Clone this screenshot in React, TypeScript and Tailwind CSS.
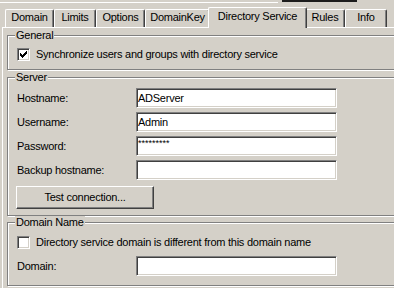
import React from 'react';

const sunken =
  'border border-t-[#808080] border-l-[#808080] border-b-white border-r-white shadow-[inset_1px_1px_0_#404040,inset_-1px_-1px_0_#d4d0c8] bg-white';

const tabs = [
  { label: 'Domain', cls: 'w-[49px] h-[18px] pt-[1px]' },
  { label: 'Limits', cls: 'w-[42px] h-[18px] pt-[1px]' },
  { label: 'Options', cls: 'w-[49px] h-[18px] pt-[1px]' },
  { label: 'DomainKey', cls: 'w-[65px] h-[18px] pt-[1px]' },
  { label: 'Directory Service', cls: 'relative z-10 -mx-[2px] mb-[-1px] w-[99px] h-[21px] pt-[2px]' },
  { label: 'Rules', cls: 'w-[40px] h-[18px] pt-[1px]' },
  { label: 'Info', cls: 'w-[42px] h-[18px] pt-[1px]' },
];

function Check({ checked }: { checked?: boolean }) {
  return (
    <div className={`w-[13px] h-[13px] shrink-0 flex items-center justify-center ${sunken}`}>
      {checked && (
        <svg width="7" height="7" viewBox="0 0 7 7" shapeRendering="crispEdges">
          {[2, 3, 4, 3, 2, 1, 0].map((y, i) => (
            <rect key={i} x={i} y={y} width="1" height="3" fill="#000" />
          ))}
        </svg>
      )}
    </div>
  );
}

function Group({ title, className, children }: { title: string; className: string; children: React.ReactNode }) {
  return (
    <div className={`relative w-[392px] border border-[#808080] shadow-[inset_1px_1px_0_#fff,1px_1px_0_#fff] ${className}`}>
      <span className="absolute left-[7px] -top-[7px] px-[1px] bg-[#d4d0c8]">{title}</span>
      {children}
    </div>
  );
}

function Field({ label, value, password }: { label: string; value?: string; password?: boolean }) {
  return (
    <div className="flex items-center h-[20px]">
      <span className="w-[119px]">{label}</span>
      <div className={`w-[201px] h-[20px] pl-[1px] flex ${password ? 'items-start pt-[2px] text-[9px] leading-[9px] tracking-normal' : 'items-center'} ${sunken}`}>
        {value}
      </div>
    </div>
  );
}

export default function App() {
  return (
    <div className="w-[394px] h-[288px] overflow-hidden bg-[#d4d0c8] font-['Liberation_Sans',Arial,sans-serif] text-[11px] leading-[13px] tracking-[-0.25px] text-black">
      <div className="relative h-[7px]">
        <div className="absolute left-0 top-[2px] w-[278px] h-px bg-white" />
        <div className="absolute left-[282px] -top-[3px] w-[75px] h-[5px] border-2 border-[#1c1c1c] bg-[#d4d0c8]" />
      </div>

      <div className="flex items-end h-[20px] pl-[5px]">
        {tabs.map((t) => (
          <div
            key={t.label}
            className={`flex justify-center whitespace-nowrap bg-[#d4d0c8] border-l border-t border-white border-r border-r-[#404040] rounded-tl-[2px] rounded-tr-[2px] shadow-[inset_-1px_0_0_#808080] ${t.cls}`}
          >
            {t.label}
          </div>
        ))}
      </div>

      <div className="w-[400px] h-[270px] ml-[2px] border-l border-t border-white pl-[4px] pt-[7px]">
        <Group title="General" className="h-[35px] pl-[9px] pt-[12px]">
          <div className="flex items-center gap-[6px]">
            <Check checked />
            <span>Synchronize users and groups with directory service</span>
          </div>
        </Group>

        <Group title="Server" className="h-[139px] mt-[7px] pl-[9px] pt-[10px]">
          <div className="flex flex-col gap-[4px]">
            <Field label="Hostname:" value="ADServer" />
            <Field label="Username:" value="Admin" />
            <Field label="Password:" value="*********" password />
            <Field label="Backup hostname:" />
          </div>
          <button className="mt-[6px] -ml-[1px] w-[138px] h-[23px] flex items-center justify-center bg-[#d4d0c8] border border-t-white border-l-white border-b-[#404040] border-r-[#404040] shadow-[inset_-1px_-1px_0_#808080]">
            Test connection...
          </button>
        </Group>

        <Group title="Domain Name" className="h-[64px] mt-[6px] pl-[9px] pt-[13px]">
          <div className="flex items-center gap-[6px]">
            <Check />
            <span>Directory service domain is different from this domain name</span>
          </div>
          <div className="mt-[7px]">
            <Field label="Domain:" />
          </div>
        </Group>
      </div>
    </div>
  );
}
